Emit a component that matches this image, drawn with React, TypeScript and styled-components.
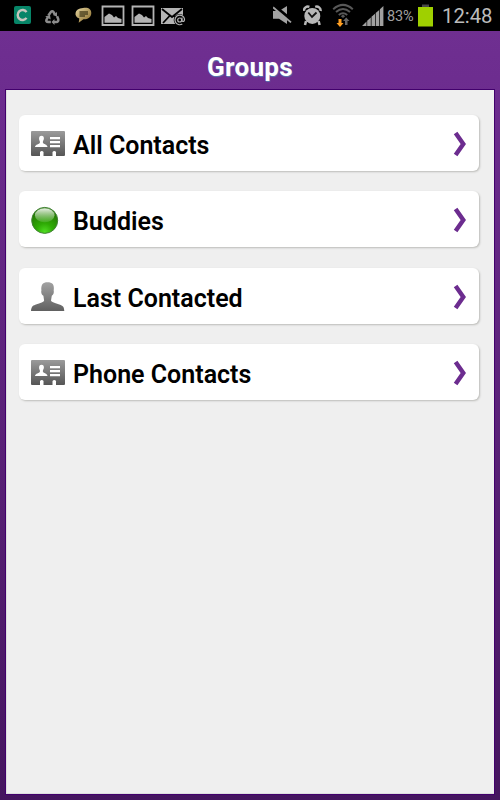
import React from "react";
import styled, { createGlobalStyle } from "styled-components";

const GlobalStyle = createGlobalStyle`
  body { margin: 0; background: #000; font-family: Roboto, sans-serif; }
  svg { display: block; flex: none; }
`;

const Screen = styled.div`
  width: 500px;
  height: 800px;
  display: flex;
  flex-direction: column;
  overflow: hidden;
`;

const StatusBar = styled.header`
  height: 31px;
  box-sizing: border-box;
  background: #000;
  display: flex;
  justify-content: space-between;
  padding: 0 7px 0 14px;
`;

const StatusGroup = styled.div`
  display: flex;
  align-items: flex-start;
`;

const StatusIcon = styled.svg<{ $gap?: number }>`
  margin-left: ${(p) => p.$gap ?? 0}px;
`;

const Percent = styled.span`
  width: 31px;
  font-size: 14.5px;
  line-height: 33px;
  letter-spacing: -0.1px;
  color: #a0a0a0;
  white-space: nowrap;
`;

const Clock = styled.span`
  width: 51px;
  margin-left: 9px;
  font-size: 20.3px;
  line-height: 33px;
  color: #bcbcbc;
`;

const Frame = styled.main`
  flex: 1;
  box-sizing: border-box;
  display: flex;
  flex-direction: column;
  padding: 0 5px 5px;
  background: linear-gradient(#6f2f91 0, #6c2c8e 70px, #45155f 100%);
`;

const Title = styled.h1`
  margin: 0;
  height: 58px;
  padding-top: 14px;
  box-sizing: border-box;
  text-align: center;
  font-size: 26px;
  line-height: 44px;
  font-weight: 700;
  letter-spacing: 0.3px;
  color: #fff;
  text-shadow: 0.5px 1px 1px rgba(80, 150, 190, 0.75);
`;

const Panel = styled.section`
  flex: 1;
  box-sizing: border-box;
  border: 1px solid #42006c;
  background: #efefef;
  padding: 25px 15px 0 13px;
  box-shadow: inset 1px -1px 0 #dedede;
`;

const List = styled.ul`
  list-style: none;
  margin: 0;
  padding: 0;
  display: flex;
  flex-direction: column;
  gap: 20.25px;
`;

const Row = styled.li`
  height: 56px;
  box-sizing: border-box;
  display: flex;
  align-items: center;
  padding: 2px 11px 0 12px;
  background: #fff;
  border-radius: 6px;
  box-shadow: 1px 1px 2px #bcbcb9;
`;

const IconCell = styled.span`
  width: 42px;
  flex: none;
`;

const Label = styled.span`
  flex: 1;
  padding-top: 4px;
  font-size: 25px;
  line-height: 30px;
  font-weight: 600;
  color: #000;
  white-space: nowrap;
`;

function CardIcon() {
  return (
    <svg width="34" height="26" viewBox="0 0 34 26">
      <defs>
        <linearGradient id="card" x1="0" y1="0" x2="0" y2="1">
          <stop offset="0" stopColor="#9b9b9b" />
          <stop offset="1" stopColor="#555" />
        </linearGradient>
      </defs>
      <path fill="url(#card)" d="M1 0H33Q34 0 34 1V24Q34 25 33 25H25V22.5Q25.5 20 23.3 20T21.5 22.5V25H12.5V22.5Q13 20 10.8 20T9 22.5V25H1Q0 25 0 24V1Q0 0 1 0Z" />
      <path fill="#fff" d="M10.5 4.8C12.3 4.8 13 6 12.9 7.5C12.8 9 12.2 9.7 11.9 10.4V11.7C12.7 13.2 16.2 13.2 16.5 16H4C4.4 13.2 8.3 13.2 8.9 11.7V10.4C7.7 8.4 7.6 4.8 10.5 4.8ZM19 6H29V8.3H19ZM19 10H29V12.3H19ZM19 14H29V16.3H19Z" />
    </svg>
  );
}

function OnlineIcon() {
  return (
    <svg width="34" height="29" viewBox="0 0 34 29">
      <defs>
        <radialGradient id="orb" cx=".5" cy=".94" r=".8">
          <stop offset="0" stopColor="#4fdd22" />
          <stop offset=".4" stopColor="#2fab05" />
          <stop offset="1" stopColor="#247704" />
        </radialGradient>
        <linearGradient id="shine" x1="0" y1="0" x2="0" y2="1">
          <stop offset="0" stopColor="#fff" stopOpacity=".9" />
          <stop offset="1" stopColor="#cceec0" stopOpacity=".15" />
        </linearGradient>
      </defs>
      <circle cx="13.7" cy="14.4" r="13" fill="url(#orb)" stroke="#418235" strokeWidth="1" />
      <ellipse cx="13.7" cy="9.2" rx="9.8" ry="7" fill="url(#shine)" />
    </svg>
  );
}

function PersonIcon() {
  return (
    <svg width="34" height="30" viewBox="0 0 34 30">
      <defs>
        <linearGradient id="person" x1="0" y1="0" x2="0" y2="1">
          <stop offset="0" stopColor="#a2a2a2" />
          <stop offset="1" stopColor="#606060" />
        </linearGradient>
      </defs>
      <path fill="url(#person)" d="M0 29C.4 24.8 1.4 23.7 4.2 22.7C8.3 21.2 12.7 20.3 13.1 18.5L12.4 13.8C10.3 13 10 9.7 10.4 8.6C9.8 2.5 12 .3 16.5 .3C21.3 .3 23.6 2.5 22.7 8.6C23.2 10.3 22.5 13.2 20.8 13.8L20 18.5C20.5 20.3 25.3 21.3 29.1 22.7C32.2 23.8 33 25 33.3 29Z" />
    </svg>
  );
}

function Chevron() {
  return (
    <svg width="15" height="26" viewBox="0 0 15 26">
      <path d="M2.6 2L10.3 13L2.6 24" fill="none" stroke="#6c2c8f" strokeWidth="4.4" />
    </svg>
  );
}

function PictureIcon({ gap }: { gap: number }) {
  return (
    <StatusIcon $gap={gap} width="24" height="31">
      <path d="M1.5 6.5H22.5V25H1.5Z" fill="#000" stroke="#b4b4b4" strokeWidth="1.8" />
      <path d="M3.5 22.8V17L6 15L8 13.5L11 15L13 17.5L15 16L17 18L20.5 19V22.8Z" fill="#b4b4b4" />
    </StatusIcon>
  );
}

function Notifications() {
  return (
    <StatusGroup>
      <StatusIcon width="17" height="31">
        <rect x="0" y="6" width="17" height="18" rx="2" fill="#078568" />
        <path d="M12.5 12.2A4.8 5 0 1 0 12.5 17.8" fill="none" stroke="#c7c5bd" strokeWidth="2.4" />
      </StatusIcon>
      <StatusIcon $gap={14} width="15" height="31" viewBox="0 0 15 31">
        <g transform="translate(0 1)">
          <g fill="none" stroke="#8c8c8c" strokeWidth="2.5">
            <path d="M3.4 14.5L6 10.8Q7.2 9.5 8.5 11L10 13.5" />
            <path d="M12.1 15.2L13.3 18.3Q13.6 21 11.3 21H8.2" />
            <path d="M5.8 21H3.2Q.6 20.8 1.6 18.5L3 16" />
          </g>
          <path fill="#8c8c8c" d="M8 13.9L12 11V15.7ZM9.5 18V24L6.5 21ZM.2 15.5L5 14L5.7 18.5Z" />
        </g>
      </StatusIcon>
      <StatusIcon $gap={15} width="18" height="31">
        <defs><linearGradient id="bubble" x1="0" y1="0" x2="1" y2="1"><stop stopColor="#e5d5a1" /><stop offset="1" stopColor="#856724" /></linearGradient></defs>
        <path d="M8 8C13 7 16.5 9 16.3 13.2C16 17.5 12.5 19.6 8.4 19.3L3.7 22.8L4.3 18.4C1 17.3 .1 15.4 .6 12.8C1 10 3.5 8.4 8 8Z" fill="url(#bubble)" />
        <path d="M4.5 12H13M4.5 14H13M4.5 16H10" stroke="#4c421f" strokeWidth="1.3" />
      </StatusIcon>
      <PictureIcon gap={8} />
      <PictureIcon gap={6} />
      <StatusIcon $gap={6} width="26" height="31">
        <path d="M0 8H22V24H0Z" fill="#b4b4b4" />
        <path d="M1 9L11 17L21 9M2 23L9 15.5M12.5 15.5L16 18" fill="none" stroke="#000" strokeWidth="1.8" />
        <circle cx="18.7" cy="20" r="6" fill="#000" />
        <circle cx="18.7" cy="20" r="2" fill="none" stroke="#b4b4b4" strokeWidth="1.2" />
        <path d="M21 17.5V21Q23.5 22.5 23.5 19A4.8 4.8 0 1 0 21.3 24" fill="none" stroke="#b4b4b4" strokeWidth="1.2" />
      </StatusIcon>
    </StatusGroup>
  );
}

function SystemStatus() {
  return (
    <StatusGroup>
      <StatusIcon width="20" height="31">
        <path d="M0 11H6L14 6V24L6 18.7H0Z" fill="#a2a2a2" />
        <path d="M1.5 6L19 20.5" stroke="#000" strokeWidth="3.2" />
        <path d="M0 7.2L18 22.4" stroke="#a2a2a2" strokeWidth="1.8" />
      </StatusIcon>
      <StatusIcon $gap={10} width="19" height="31">
        <path d="M3 21L2 25M15.6 21L16.6 25" stroke="#b8b8b8" strokeWidth="2.5" />
        <circle cx="9.3" cy="15.9" r="8" fill="#b8b8b8" />
        <path d="M1 11A4 4 0 0 1 6.4 6.8M12.2 6.8A4 4 0 0 1 17.6 11" fill="none" stroke="#b8b8b8" strokeWidth="2.5" />
        <path d="M5.3 12.5L9 17L13.5 12.5" fill="none" stroke="#111" strokeWidth="1.8" />
      </StatusIcon>
      <StatusIcon $gap={10} width="23" height="31">
        <g fill="none" stroke="#585858" strokeWidth="2">
          <path d="M1.2 9.2Q11 .5 20.8 9.2M4 12Q11 6 18 12M6.8 15Q11 11.5 15.2 15" />
        </g>
        <path d="M8.8 16.2L11 14.5L13.2 16.2L11 18Z" fill="#585858" />
        <path d="M6.5 19H9.5V23H11.5L8 27L4.5 23H6.5Z" fill="#ff9f22" />
        <path d="M13 25V21H11L14.2 17.5L17.5 21H15.5V25Z" fill="#666" />
      </StatusIcon>
      <StatusIcon $gap={7} width="22" height="31">
        <path d="M0 26L4.5 21.5V26ZM5.2 20.8L8.8 17.5V26H5.2ZM9.5 16.8L13 13.8V26H9.5ZM13.7 13L17.2 10V26H13.7ZM17.9 9.3L21.4 6V26H17.9Z" fill="#a0a0a0" />
      </StatusIcon>
      <StatusIcon $gap={2} width="1" height="31" />
      <Percent>83%</Percent>
      <StatusIcon width="15" height="31">
        <path d="M4 4.5H11V7H4Z" fill="#484848" />
        <path d="M0 7H15V26.5H0Z" fill="#9fd000" />
      </StatusIcon>
      <Clock>12:48</Clock>
    </StatusGroup>
  );
}

const groups = [
  { name: "All Contacts", icon: <CardIcon /> },
  { name: "Buddies", icon: <OnlineIcon /> },
  { name: "Last Contacted", icon: <PersonIcon /> },
  { name: "Phone Contacts", icon: <CardIcon /> },
];

export default function App() {
  return (
    <Screen>
      <GlobalStyle />
      <StatusBar>
        <Notifications />
        <SystemStatus />
      </StatusBar>
      <Frame>
        <Title>Groups</Title>
        <Panel>
          <List>
            {groups.map((group) => (
              <Row key={group.name}>
                <IconCell>{group.icon}</IconCell>
                <Label>{group.name}</Label>
                <Chevron />
              </Row>
            ))}
          </List>
        </Panel>
      </Frame>
    </Screen>
  );
}
